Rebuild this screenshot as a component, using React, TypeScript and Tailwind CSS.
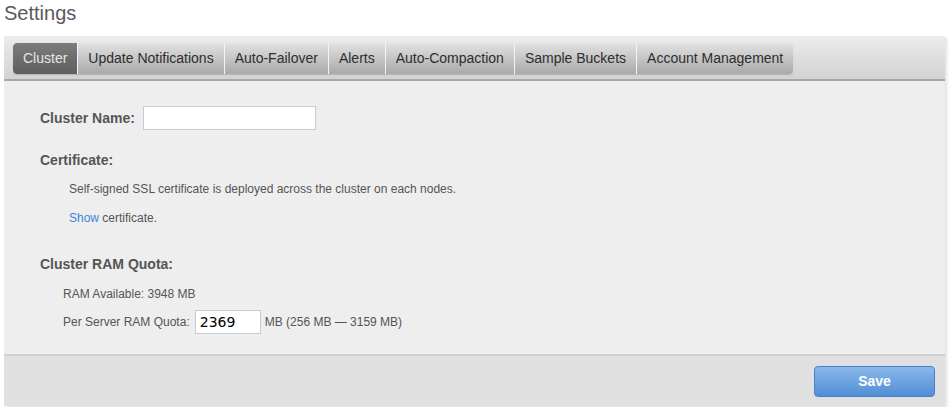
import { useState } from "react";

const TABS = [
  "Cluster",
  "Update Notifications",
  "Auto-Failover",
  "Alerts",
  "Auto-Compaction",
  "Sample Buckets",
  "Account Management",
];

export default function App() {
  const [active, setActive] = useState(0);

  return (
    <div className="w-[950px] h-[407px] bg-white font-['Liberation_Sans',Arial,sans-serif] text-[#555]">
      <h1 className="pl-[4px] pt-[1px] text-[20px] leading-[24px] text-[#5a5a5a]">Settings</h1>

      <div className="mt-[11px] ml-[4px] w-[941px] shadow-[2px_2px_3px_rgba(0,0,0,0.12)]">
        {/* tab bar */}
        <div className="h-[45px] pl-[9px] pt-[7px] bg-gradient-to-b from-[#ececec] to-[#d2d2d2] border-b-2 border-[#a7a7b3]">
          <div className="flex h-[31px] rounded-[4px] overflow-hidden w-fit shadow-[0_1px_1px_rgba(0,0,0,0.15)]">
            {TABS.map((t, i) => (
              <button
                key={t}
                type="button"
                onClick={() => setActive(i)}
                className={
                  i === active
                    ? "px-[10px] text-[14px] text-[#e6e6e6] bg-gradient-to-b from-[#7c7c7c] to-[#5e5e5e] rounded-l-[4px]"
                    : "px-[10px] text-[14px] text-[#2e2e2e] bg-gradient-to-b from-[#e2e2e2] to-[#a9a9a9] border-l border-[#f4f4f4] last:rounded-r-[4px]"
                }
              >
                {t}
              </button>
            ))}
          </div>
        </div>

        {/* body */}
        <div className="bg-[#eeeeee] h-[275px] pl-[36px] pt-[25px] border-b-2 border-[#d0d0d0]">
          <div className="flex items-center gap-[8px]">
            <span className="font-bold text-[14px]">Cluster Name:</span>
            <input
              type="text"
              className="w-[173px] h-[24px] bg-white border border-[#c8ccd0] outline-none"
            />
          </div>

          <div className="mt-[20px] font-bold text-[14px]">Certificate:</div>
          <div className="pl-[29px] mt-[10px] text-[12px] leading-[16px]">
            Self-signed SSL certificate is deployed across the cluster on each nodes.
          </div>
          <div className="pl-[29px] mt-[13px] text-[12px] leading-[16px]">
            <a href="#" className="text-[#3a87d8]">Show</a> certificate.
          </div>

          <div className="mt-[28px] font-bold text-[14px]">Cluster RAM Quota:</div>
          <div className="pl-[23px] mt-[11px] text-[12px] leading-[16px]">RAM Available: 3948 MB</div>
          <div className="pl-[23px] mt-[8px] flex items-center text-[12px]">
            <span>Per Server RAM Quota:</span>
            <input
              type="text"
              defaultValue="2369"
              className="ml-[5px] w-[66px] h-[24px] pl-[4px] bg-white border border-[#c8ccd0] outline-none text-[14px] text-black font-['DejaVu_Sans',sans-serif]"
            />
            <span className="ml-[4px]">MB (256 MB — 3159 MB)</span>
          </div>
        </div>

        {/* footer */}
        <div className="bg-[#dfe0df] h-[50px] flex items-center justify-end pr-[10px]">
          <button
            type="button"
            className="w-[121px] h-[31px] rounded-[4px] border border-[#4a7fc6] bg-gradient-to-b from-[#8ab8ea] to-[#4f8fd6] text-white font-bold text-[14px]"
          >
            Save
          </button>
        </div>
      </div>
    </div>
  );
}
